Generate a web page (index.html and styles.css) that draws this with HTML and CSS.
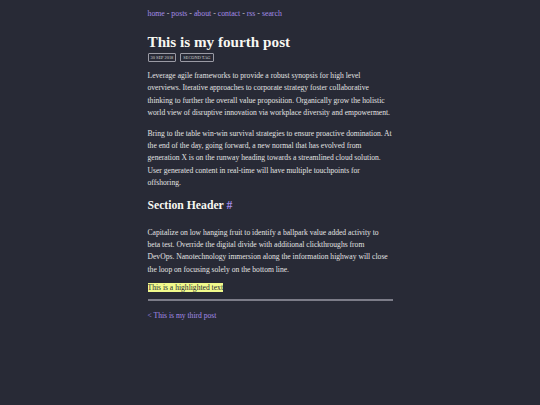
FILE: index.html
```html
<!DOCTYPE html>
<html>
<head>
<meta charset="utf-8">
<link rel="stylesheet" href="styles.css">
</head>
<body>
<div class="page">
  <nav class="nav">
    <a href="#">home</a> - <a href="#">posts</a> - <a href="#">about</a> - <a href="#">contact</a> - <a href="#">rss</a> - <a href="#">search</a>
  </nav>
  <h1 class="title">This is my fourth post</h1>
  <div class="tags"><span class="tag">30 SEP 2018</span><span class="tag">SECOND TAG</span></div>
  <p>Leverage agile frameworks to provide a robust synopsis for high level overviews. Iterative approaches to corporate strategy foster collaborative thinking to further the overall value proposition. Organically grow the holistic world view of disruptive innovation via workplace diversity and empowerment.</p>
  <p>Bring to the table win-win survival strategies to ensure proactive domination. At the end of the day, going forward, a new normal that has evolved from generation X is on the runway heading towards a streamlined cloud solution. User generated content in real-time will have multiple touchpoints for offshoring.</p>
  <h2 class="section">Section Header <a href="#" class="anchor">#</a></h2>
  <p>Capitalize on low hanging fruit to identify a ballpark value added activity to beta test. Override the digital divide with additional clickthroughs from DevOps. Nanotechnology immersion along the information highway will close the loop on focusing solely on the bottom line.</p>
  <p class="hl-para"><mark class="hl">This is a highlighted text</mark></p>
  <hr class="rule">
  <div class="prev"><a href="#">&lt; This is my third post</a></div>
</div>
</body>
</html>
```
FILE: styles.css
```css
html, body {
  margin: 0;
  padding: 0;
  background: #282a36;
}
body {
  font-family: "Liberation Serif", "Times New Roman", serif;
  color: #e2e2e2;
  font-size: 7.6px;
  line-height: 12.4px;
}
.page {
  width: 245px;
  margin: 0 auto;
  padding-top: 8px;
}
a {
  color: #a48de8;
  text-decoration: none;
}
.nav {
  color: #c8c8c8;
  font-size: 7.8px;
  line-height: 12px;
}
.title {
  font-size: 15.2px;
  line-height: 18px;
  font-weight: bold;
  color: #f8f8f2;
  margin: 13px 0 2px;
}
.tags {
  display: flex;
  gap: 4px;
  margin-bottom: 8px;
}
.tag {
  font-size: 4.4px;
  line-height: 7px;
  padding: 0 2px;
  border: 1px solid #9a9aa4;
  border-radius: 1px;
  color: #d8d8d8;
}
p {
  margin: 0 0 8px;
}
.section {
  font-size: 11.7px;
  line-height: 16px;
  font-weight: bold;
  color: #f8f8f2;
  margin: 8px 0 13px;
}
.hl-para {
  margin-top: -2px;
  margin-bottom: 4px;
}
.hl {
  background: #f1fa8c;
  color: #282a36;
}
.rule {
  border: 0;
  height: 2px;
  background: #7c7c88;
  margin: 0 0 9px;
}
.prev {
  font-size: 7.6px;
}
```
